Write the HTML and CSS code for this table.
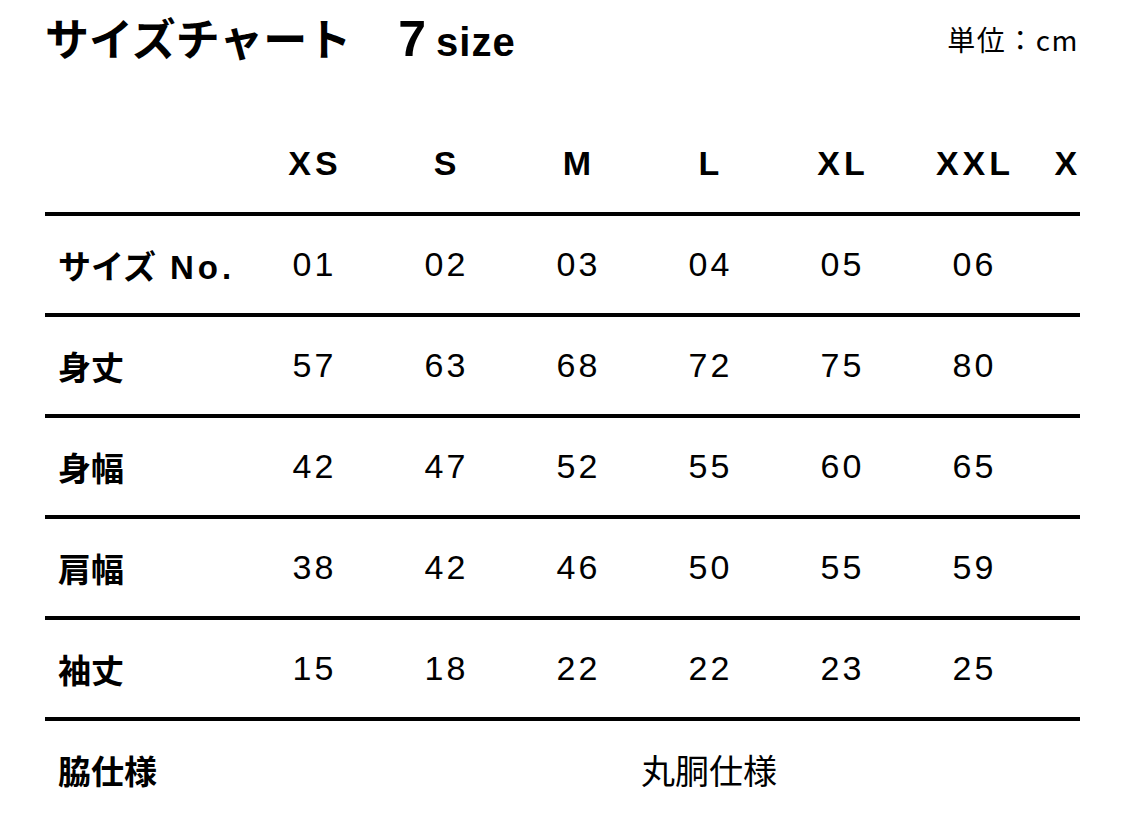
FILE: index.html
```html
<!DOCTYPE html>
<html lang="ja">
<head>
<meta charset="utf-8">
<title>サイズチャート</title>
<link rel="stylesheet" href="styles.css">
</head>
<body>
<div class="page">
  <header class="top">
    <h1 class="title"><span class="title-jp">サイズチャート</span><span class="title-num">7</span><span class="title-size">size</span></h1>
    <div class="unit">単位：cm</div>
  </header>
  <div class="chart">
    <div class="row head">
      <div class="label"></div>
      <div class="cell">XS</div>
      <div class="cell">S</div>
      <div class="cell">M</div>
      <div class="cell">L</div>
      <div class="cell">XL</div>
      <div class="cell">XXL</div>
      <div class="cell">XXXL</div>
    </div>
    <div class="row">
      <div class="label">サイズ<span class="latin">No.</span></div>
      <div class="cell">01</div>
      <div class="cell">02</div>
      <div class="cell">03</div>
      <div class="cell">04</div>
      <div class="cell">05</div>
      <div class="cell">06</div>
      <div class="cell"></div>
    </div>
    <div class="row">
      <div class="label">身丈</div>
      <div class="cell">57</div>
      <div class="cell">63</div>
      <div class="cell">68</div>
      <div class="cell">72</div>
      <div class="cell">75</div>
      <div class="cell">80</div>
      <div class="cell"></div>
    </div>
    <div class="row">
      <div class="label">身幅</div>
      <div class="cell">42</div>
      <div class="cell">47</div>
      <div class="cell">52</div>
      <div class="cell">55</div>
      <div class="cell">60</div>
      <div class="cell">65</div>
      <div class="cell"></div>
    </div>
    <div class="row">
      <div class="label">肩幅</div>
      <div class="cell">38</div>
      <div class="cell">42</div>
      <div class="cell">46</div>
      <div class="cell">50</div>
      <div class="cell">55</div>
      <div class="cell">59</div>
      <div class="cell"></div>
    </div>
    <div class="row">
      <div class="label">袖丈</div>
      <div class="cell">15</div>
      <div class="cell">18</div>
      <div class="cell">22</div>
      <div class="cell">22</div>
      <div class="cell">23</div>
      <div class="cell">25</div>
      <div class="cell"></div>
    </div>
    <div class="row last">
      <div class="label">脇仕様</div>
      <div class="cell span">丸胴仕様</div>
    </div>
  </div>
</div>
</body>
</html>
```
FILE: styles.css
```css
html, body {
  margin: 0;
  padding: 0;
  background: #ffffff;
}

body {
  font-family: "Liberation Sans", "Noto Sans CJK JP", sans-serif;
  color: #000000;
  overflow: hidden;
}

.page {
  width: 1035px;
  padding-left: 45px;
}

.top {
  height: 77px;
  margin-bottom: 38px;
  display: flex;
  align-items: center;
  justify-content: space-between;
}

.title {
  margin: 0;
  display: flex;
  align-items: baseline;
  font-weight: 700;
  line-height: 1;
}

.title-jp {
  font-family: "Noto Sans CJK JP", sans-serif;
  font-size: 44px;
}

.title-num {
  font-size: 50px;
  margin-left: 47px;
}

.title-size {
  font-size: 40px;
  margin-left: 10px;
  letter-spacing: 1px;
}

.unit {
  font-family: "Noto Sans CJK JP", sans-serif;
  font-size: 28px;
  letter-spacing: 1.5px;
  margin-right: 1px;
}

.chart {
  width: 1035px;
  overflow: hidden;
}

.row {
  display: grid;
  grid-template-columns: 202px repeat(7, 132px);
  width: 1126px;
  height: 97px;
  align-items: center;
  border-bottom: 4px solid #000000;
}

.row.last {
  border-bottom: none;
}

.label {
  padding-left: 13px;
  font-family: "Noto Sans CJK JP", sans-serif;
  font-weight: 700;
  font-size: 33px;
  white-space: nowrap;
}

.label .latin {
  font-family: "Liberation Sans", sans-serif;
  letter-spacing: 4px;
  margin-left: 14px;
}

.cell {
  text-align: center;
  font-size: 34px;
  letter-spacing: 3px;
  padding-left: 3px;
}

.head .cell {
  font-weight: 700;
  font-size: 34px;
  letter-spacing: 4px;
  padding-left: 4px;
}

.cell.span {
  grid-column: 2 / span 7;
  font-family: "Noto Sans CJK JP", sans-serif;
  font-size: 34px;
  letter-spacing: 0;
  padding-left: 0;
}
```
